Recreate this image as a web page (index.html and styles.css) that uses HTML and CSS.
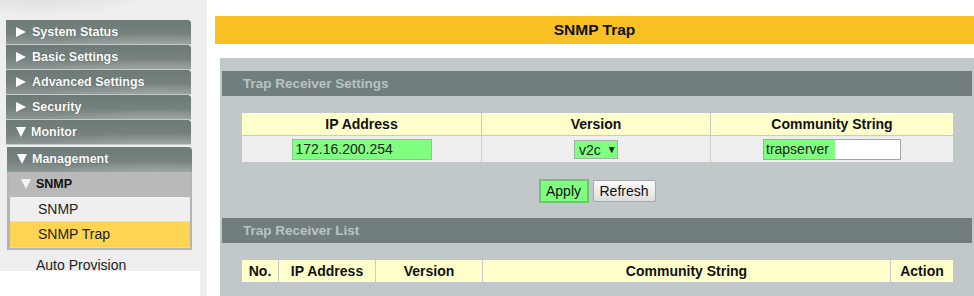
FILE: index.html
```html
<!DOCTYPE html>
<html lang="en">
<head>
    <meta charset="UTF-8">
    <title>SNMP Trap</title>
    <link rel="stylesheet" href="styles.css">
</head>
<body>
    <div class="page">
        <!-- Left navigation -->
        <div class="sidebar">
            <div class="menu-item"><span class="tri-right"></span>System Status</div>
            <div class="menu-item"><span class="tri-right"></span>Basic Settings</div>
            <div class="menu-item"><span class="tri-right"></span>Advanced Settings</div>
            <div class="menu-item"><span class="tri-right"></span>Security</div>
            <div class="menu-item"><span class="tri-down"></span>Monitor</div>
            <div class="menu-item open"><span class="tri-down"></span>Management</div>
            <div class="submenu">
                <div class="submenu-title"><span class="tri-down light"></span>SNMP</div>
                <div class="submenu-link">SNMP</div>
                <div class="submenu-link active">SNMP Trap</div>
            </div>
            <div class="plain-link">Auto Provision</div>
            <div class="sidebar-blank"></div>
        </div>

        <!-- Main content -->
        <div class="main">
            <div class="top-line"></div>
            <div class="page-title">SNMP Trap</div>

            <div class="panel">
                <div class="section-title">Trap Receiver Settings</div>
                <table class="grid settings">
                    <tr>
                        <th class="col-ip">IP Address</th>
                        <th class="col-ver">Version</th>
                        <th>Community String</th>
                    </tr>
                    <tr>
                        <td><input class="ip-input" type="text" value="172.16.200.254"></td>
                        <td><div class="version-select">v2c <span class="arrow">&#9660;</span></div></td>
                        <td><input class="community-input" type="text" value="trapserver"></td>
                    </tr>
                </table>
                <div class="actions">
                    <button class="btn btn-apply">Apply</button>
                    <button class="btn btn-refresh">Refresh</button>
                </div>

                <div class="section-title">Trap Receiver List</div>
                <table class="grid list">
                    <tr>
                        <th class="col-no">No.</th>
                        <th class="col-lip">IP Address</th>
                        <th class="col-lver">Version</th>
                        <th>Community String</th>
                        <th class="col-action">Action</th>
                    </tr>
                </table>
            </div>
        </div>
    </div>
</body>
</html>
```

FILE: styles.css
```css
body {
    margin: 0;
    font-family: "Liberation Sans", Arial, sans-serif;
    background-color: #fff;
    color: #111;
}
.page {
    display: flex;
    height: 296px;
    overflow: hidden;
}

/* sidebar */
.sidebar {
    width: 207px;
    flex-shrink: 0;
    background-color: #eeeeee;
    padding-top: 20px;
    box-sizing: border-box;
    background-image: radial-gradient(ellipse 120px 30px at 40px -14px, #d6d6d6 0%, #eeeeee 100%);
    background-repeat: no-repeat;
}
.menu-item {
    width: 175px;
    height: 24px;
    margin-left: 6px;
    padding-left: 10px;
    border-bottom: 1px solid #c3cac8;
    border-top-right-radius: 4px;
    background-color: #7a8583;
    background-image:
        radial-gradient(ellipse 120px 16px at 150px 30px, #a3adab 0%, rgba(163,173,171,0) 100%),
        linear-gradient(to bottom, #6d7a78 0%, #76817f 55%, #8c9795 100%);
    color: #fff;
    font-size: 12.5px;
    font-weight: bold;
    line-height: 24px;
    text-shadow: 0 0 1px #3a4543;
}
.menu-item.open {
    margin-top: 2px;
    margin-left: 7px;
    border-bottom: none;
    height: 25px;
    line-height: 25px;
}
.tri-right,
.tri-down {
    display: inline-block;
    width: 0;
    height: 0;
    vertical-align: middle;
    position: relative;
    top: -1px;
}
.tri-right {
    border-top: 5px solid transparent;
    border-bottom: 5px solid transparent;
    border-left: 10px solid #fff;
    margin-right: 6px;
}
.tri-down {
    border-left: 5px solid transparent;
    border-right: 5px solid transparent;
    border-top: 10px solid #fff;
    margin-right: 5px;
}
.tri-down.light {
    border-top-color: #f4f4f4;
    margin-right: 5px;
}
.submenu {
    width: 181px;
    margin-left: 7px;
    border: 2px solid #b4b4b4;
    border-top: none;
    background-color: #b4b4b4;
}
.submenu-title {
    height: 25px;
    line-height: 25px;
    padding-left: 12px;
    font-size: 12.5px;
    font-weight: bold;
    color: #111;
    background-color: #b9b9b9;
}
.submenu-link {
    height: 24px;
    line-height: 24px;
    margin-left: 1px;
    padding-left: 28px;
    font-size: 14px;
    color: #222;
    background-color: #efefef;
    border-bottom: 1px solid #dcdcdc;
}
.submenu-link.active {
    background-color: #ffd452;
    height: 25px;
    line-height: 25px;
}
.plain-link {
    height: 20px;
    margin-top: 1px;
    padding-left: 36px;
    font-size: 14px;
    line-height: 28px;
    color: #222;
    overflow: hidden;
}
.sidebar-blank {
    width: 200px;
    height: 25px;
    background-color: #fff;
}

/* main */
.main {
    flex: 1;
    display: flex;
    flex-direction: column;
    padding-left: 8px;
}
.top-line {
    align-self: flex-end;
    width: 64px;
    height: 2px;
    margin-top: 4px;
    background-color: #7b6d99;
}
.page-title {
    margin-top: 12px;
    height: 28px;
    line-height: 28px;
    background-color: #f9c023;
    text-align: center;
    font-size: 15.5px;
    font-weight: bold;
    color: #111;
}
.panel {
    margin-top: 14px;
    margin-left: 5px;
    padding: 13px 2px 20px 2px;
    background-color: #c0c8c9;
    flex: 1;
}
.section-title {
    height: 25px;
    line-height: 25px;
    padding-left: 21px;
    background-color: #727e7d;
    color: #b9c3c3;
    font-size: 13.5px;
    font-weight: bold;
}
.grid {
    margin: 17px 0 0 20px;
    width: 711px;
    border-collapse: collapse;
    font-size: 14px;
}
.grid th {
    height: 22px;
    padding: 0;
    background-color: #ffffcc;
    font-weight: bold;
    color: #111;
    border-left: 1px solid #c9cdc9;
}
.grid td {
    height: 26px;
    padding: 0;
    text-align: center;
    background-color: #eeeeee;
    border-left: 1px solid #c9cdc9;
    border-top: 1px solid #c9cdc9;
}
.grid tr > :first-child {
    border-left: none;
}
.col-ip { width: 239px; }
.col-ver { width: 228px; }
.col-no { width: 36px; }
.col-lip { width: 96px; }
.col-lver { width: 106px; }
.col-action { width: 62px; }

.ip-input {
    width: 140px;
    height: 21px;
    box-sizing: border-box;
    margin: 0;
    padding: 0 3px;
    border: 1px solid #8fc48f;
    background-color: #80ff80;
    font-family: "Liberation Sans", Arial, sans-serif;
    font-size: 14px;
    color: #222;
    vertical-align: middle;
}
.version-select {
    display: inline-block;
    width: 44px;
    height: 19px;
    box-sizing: border-box;
    border: 1px solid #a3b0a3;
    background-color: #80ff80;
    font-size: 14px;
    line-height: 17px;
    color: #222;
    text-align: left;
    padding-left: 4px;
    vertical-align: middle;
}
.version-select .arrow {
    font-size: 10px;
    margin-left: 2px;
    vertical-align: 2px;
}
.community-input {
    width: 138px;
    height: 21px;
    box-sizing: border-box;
    margin: 0;
    padding: 0 2px;
    border: 1px solid #a6a6a6;
    background: linear-gradient(to right, #80ff80 71px, #ffffff 71px);
    font-family: "Liberation Sans", Arial, sans-serif;
    font-size: 14px;
    color: #222;
    vertical-align: middle;
}

.actions {
    display: flex;
    justify-content: center;
    align-items: center;
    gap: 4px;
    margin: 17px 0 15px 0;
}
.btn {
    font-family: "Liberation Sans", Arial, sans-serif;
    font-size: 14px;
    color: #111;
    padding: 0;
    cursor: pointer;
}
.btn-apply {
    width: 50px;
    height: 24px;
    background-color: #80ff80;
    border: 2px solid #6fc36f;
}
.btn-refresh {
    width: 63px;
    height: 22px;
    border: 1px solid #a8a8a8;
    border-radius: 2px;
    background: linear-gradient(to bottom, #fafafa, #dedede);
}
```
